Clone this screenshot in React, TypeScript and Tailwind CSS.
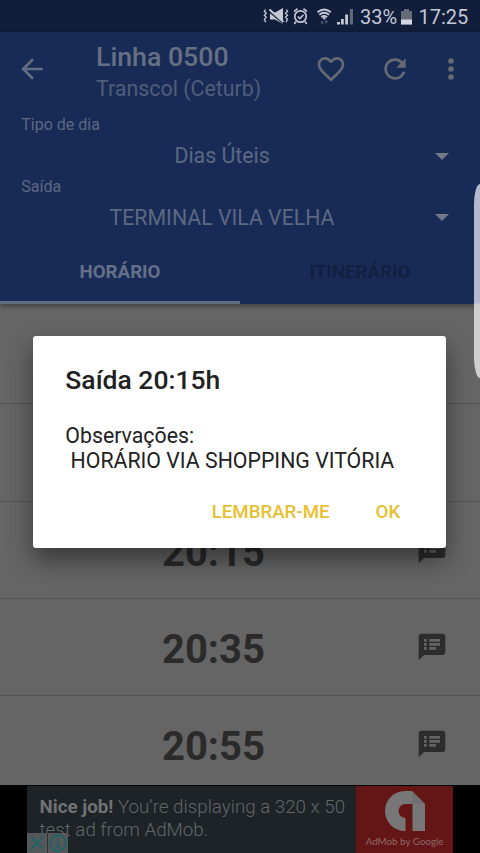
import React from "react";

function StatusBar() {
  return (
    <div className="flex h-8 shrink-0 items-center bg-[#101d3b] text-[#c3c8d2]">
      <svg className="ml-[263px] h-8 w-[92px] shrink-0" viewBox="263 0 92 32" fill="none" stroke="currentColor">
        <path d="M265.5 9.500l-1.200 1.800 2 2-2 2 2 2-2 2 1.500 3M286.500 9.500l1 1.800-2 2 2 2-2 2 2 2-1.500 3" strokeWidth="1.300" />
        <path d="M270 12.500h5l8-4.500v16l-8-4.500h-5z" fill="currentColor" stroke="none" />
        <path d="M269 11.500l15 12.500" stroke="#101d3b" strokeWidth="1.600" />
        <path d="M269.500 9.500l14 12.500" strokeWidth="2" />
        <circle cx="300.500" cy="16.500" r="5.700" strokeWidth="1.700" />
        <path d="M294 11.700l3.500-3M307 11.700l-3.500-3M296 21.500l-1.700 2.500M305 21.500l1.700 2.500M297.800 16.500l2 2 3.700-3.800" strokeWidth="1.600" />
        <path d="M317.500 12.200q6.700-5.500 13.400 0M319.300 14.700q4.900-4 9.800 0M321.300 17.200q2.900-2.400 5.800 0" strokeWidth="1.800" />
        <circle cx="324.200" cy="18.300" r="1.300" fill="currentColor" stroke="none" />
        <path d="M322.200 20.500v3M326.200 20.500v3M320.800 22l1.400 1.500 1.400-1.500M324.800 22l1.400-1.500 1.400 1.500" stroke="#5f687b" strokeWidth="1" />
        <path d="M337 22h3v2.500h-3zM341 19h2.800v5.500H341zM345.200 14.500h2.800v10h-2.800z" fill="currentColor" stroke="none" />
        <path d="M349.800 9h3.200v15.500h-3.200z" fill="#5f687b" stroke="none" />
      </svg>
      <span className="ml-[5px] w-[37px] shrink-0 whitespace-nowrap pt-[2px] text-[20px] leading-none">33%</span>
      <svg className="ml-[4px] h-8 w-[11px] shrink-0" viewBox="401 0 11 32">
        <path d="M401 11h3V9h5v2h3v13.500h-11z" fill="#656c78" />
        <path d="M401 19.500h11v5h-11z" fill="#d5d8df" />
      </svg>
      <span className="ml-[6.500px] whitespace-nowrap pt-[2px] text-[20px] leading-none">17:25</span>
    </div>
  );
}

function Toolbar() {
  return (
    <div className="flex h-[75px] text-[#646d80]">
      <svg className="ml-[16px] mt-[21px] h-8 w-8" viewBox="0 0 24 24" fill="currentColor">
        <path d="M20 11H7.830l5.590-5.590L12 4l-8 8 8 8 1.410-1.410L7.830 13H20v-2z" />
      </svg>
      <div className="ml-[48px] flex w-[218px] flex-col pt-[10px]">
        <div className="text-[26.7px] font-medium leading-[31px] text-[#676f82]">Linha 0500</div>
        <div className="mt-[3px] text-[21.4px] leading-[25px] text-[#515d78]">Transcol (Ceturb)</div>
      </div>
      <svg className="ml-[0.5px] mt-[21px] h-8 w-8" viewBox="0 0 24 24" fill="#656a73">
        <path d="M16.500 3c-1.740 0-3.410.810-4.500 2.090C10.910 3.810 9.240 3 7.500 3 4.420 3 2 5.420 2 8.500c0 3.780 3.400 6.860 8.550 11.540L12 21.350l1.450-1.320C18.600 15.360 22 12.280 22 8.500 22 5.420 19.580 3 16.500 3zm-4.400 15.550l-.1.100-.1-.1C7.140 14.240 4 11.390 4 8.500 4 6.500 5.500 5 7.500 5c1.540 0 3.040.990 3.570 2.360h1.870C13.460 5.990 14.960 5 16.500 5c2 0 3.500 1.500 3.500 3.500 0 2.890-3.140 5.740-7.900 10.050z" />
      </svg>
      <svg className="ml-[32px] mt-[21px] h-8 w-8" viewBox="0 0 24 24" fill="#656a73">
        <path d="M17.650 6.350C16.200 4.900 14.210 4 12 4c-4.420 0-7.990 3.580-7.990 8s3.570 8 7.990 8c3.730 0 6.840-2.550 7.730-6h-2.080c-.820 2.330-3.040 4-5.650 4-3.310 0-6-2.690-6-6s2.690-6 6-6c1.660 0 3.140.690 4.220 1.780L13 11h7V4l-2.350 2.350z" />
      </svg>
      <svg className="ml-[24px] mt-[21px] h-8 w-8" viewBox="0 0 24 24" fill="#656a73">
        <circle cx="12" cy="6" r="2.100" />
        <circle cx="12" cy="12" r="2.100" />
        <circle cx="12" cy="18" r="2.100" />
      </svg>
    </div>
  );
}

function Spinner({ label, value }: { label: string; value: string }) {
  return (
    <div className="h-[61.5px] pl-[21.3px] pt-[8px] text-[#5d6880]">
      <div className="text-[16px] leading-[20px]">{label}</div>
      <div className="flex h-[42px] items-center">
        <div className="w-[401.5px] pt-[0.5px] text-center text-[21.3px]">{value}</div>
        <svg className="ml-[12px] h-[7px] w-[14px]" viewBox="0 0 14 7">
          <path d="M0 0h14l-7 7z" fill="#74798a" />
        </svg>
      </div>
    </div>
  );
}

function Tabs() {
  return (
    <div className="mt-auto flex h-[66px] text-[18.7px] font-bold">
      <div className="flex w-1/2 items-center justify-center border-b-[3px] border-[#616c83] pt-[5px] text-[#657086]">HORÁRIO</div>
      <div className="flex w-1/2 items-center justify-center pt-[2px] text-[#11203f]">ITINERÁRIO</div>
    </div>
  );
}

function NoteIcon() {
  return (
    <svg className="h-[32px] w-[32px]" viewBox="0 0 24 24" fill="#2c2c2c">
      <path d="M20 2H4c-1.100 0-1.990.900-1.990 2L2 22l4-4h14c1.100 0 2-.900 2-2V4c0-1.100-.900-2-2-2zM8 14H6v-2h2v2zm0-3H6V9h2v2zm0-3H6V6h2v2zm7 6h-5v-2h5v2zm3-3h-8V9h8v2zm0-3h-8V6h8v2z" />
    </svg>
  );
}

function TimeRow({ time }: { time?: string }) {
  return (
    <div className="flex h-[97.33px] shrink-0 items-center border-b border-[#555]">
      <div className="w-[427px] shrink-0 pt-[6px] text-center text-[40px] font-bold leading-none text-[#2a2a2a]">{time}</div>
      {time && <div className="-ml-[11px]"><NoteIcon /></div>}
    </div>
  );
}

function AdBanner() {
  return (
    <div className="flex h-[68px] shrink-0 justify-center bg-black">
      <div className="relative mt-px flex w-[426px] bg-[#1d2327]">
        <div className="w-[330px] whitespace-nowrap pl-[12.5px] pt-[10px] text-[18.75px] font-light leading-[22.5px] text-[#62676a]">
          <b className="font-bold text-[#707274]">Nice job!</b> You’re displaying a 320 x 50
          <br />
          test ad from AdMob.
        </div>
        <div className="flex w-[97px] flex-col items-center bg-[#641616] text-[#8c6969]">
          <svg className="mt-[5px] h-[41px] w-[40px]" viewBox="0 0 40 41" fill="#777">
            <path d="M20 0h7l13 13v27H27.500V13H20.500a7 7 0 0 0 0 14V40H20A20 20 0 0 1 20 0z" />
            <path d="M27.500 13H40L27.500 .500z" fill="#6f6f6f" />
          </svg>
          <div className="mt-[3px] whitespace-nowrap font-['Lato'] text-[9.8px] leading-[12px]">AdMob by Google</div>
        </div>
        <div className="absolute bottom-0 left-0 flex h-[20px] w-[41px] gap-px bg-[#333]">
          <svg className="h-[20px] w-[20px] bg-[#555859]" viewBox="0 0 20 20" stroke="#1c6268" strokeWidth="1.800">
            <path d="M4 4l12 12M16 4L4 16" />
          </svg>
          <svg className="h-[20px] w-[20px] bg-[#555859]" viewBox="0 0 20 20" fill="none" stroke="#1c6268" strokeWidth="1.700">
            <circle cx="10" cy="10" r="7.800" />
            <path d="M10 4.500v2.200M8 8.500h2v6M7.800 14.500h4.400" />
          </svg>
        </div>
      </div>
    </div>
  );
}

function Dialog() {
  return (
    <div className="absolute left-[33.3px] top-[336.4px] flex h-[212px] w-[413px] flex-col rounded-[3px] bg-white px-[32px] text-[#212121] shadow-[0_12px_24px_rgba(0,0,0,0.45)]">
      <div className="mt-[28px] text-[26.5px] font-medium leading-[32px]">Saída 20:15h</div>
      <div className="mt-[27px] whitespace-pre text-[21.3px] leading-[25px]">{"Observações:\n HORÁRIO VIA SHOPPING VITÓRIA"}</div>
      <div className="mt-[27px] flex justify-end gap-[46px] pr-[14px] text-[18.7px] font-medium leading-[24px] text-[#e8c02f]">
        <span>LEMBRAR-ME</span>
        <span>OK</span>
      </div>
    </div>
  );
}

export default function App() {
  return (
    <div className="relative flex h-[853px] w-[480px] flex-col overflow-hidden bg-[#656565] font-['Roboto',sans-serif]">
      <StatusBar />
      <header className="z-0 flex h-[272px] shrink-0 flex-col bg-[#182b57] shadow-[0_2px_5px_rgba(0,0,0,0.4)]">
        <Toolbar />
        <Spinner label="Tipo de dia" value="Dias Úteis" />
        <Spinner label="Saída" value="TERMINAL VILA VELHA" />
        <Tabs />
      </header>
      <main className="flex h-[481px] shrink-0 flex-col overflow-hidden pt-[3px]">
        <TimeRow />
        <TimeRow />
        <TimeRow time="20:15" />
        <TimeRow time="20:35" />
        <TimeRow time="20:55" />
      </main>
      <AdBanner />
      <Dialog />
      <div className="absolute left-[474px] top-[184px] h-[194px] w-[12px] rounded-[7px/24px] bg-linear-to-b from-[#b4b9ce] from-61% to-[#cfcfcf] to-62%" />
    </div>
  );
}
